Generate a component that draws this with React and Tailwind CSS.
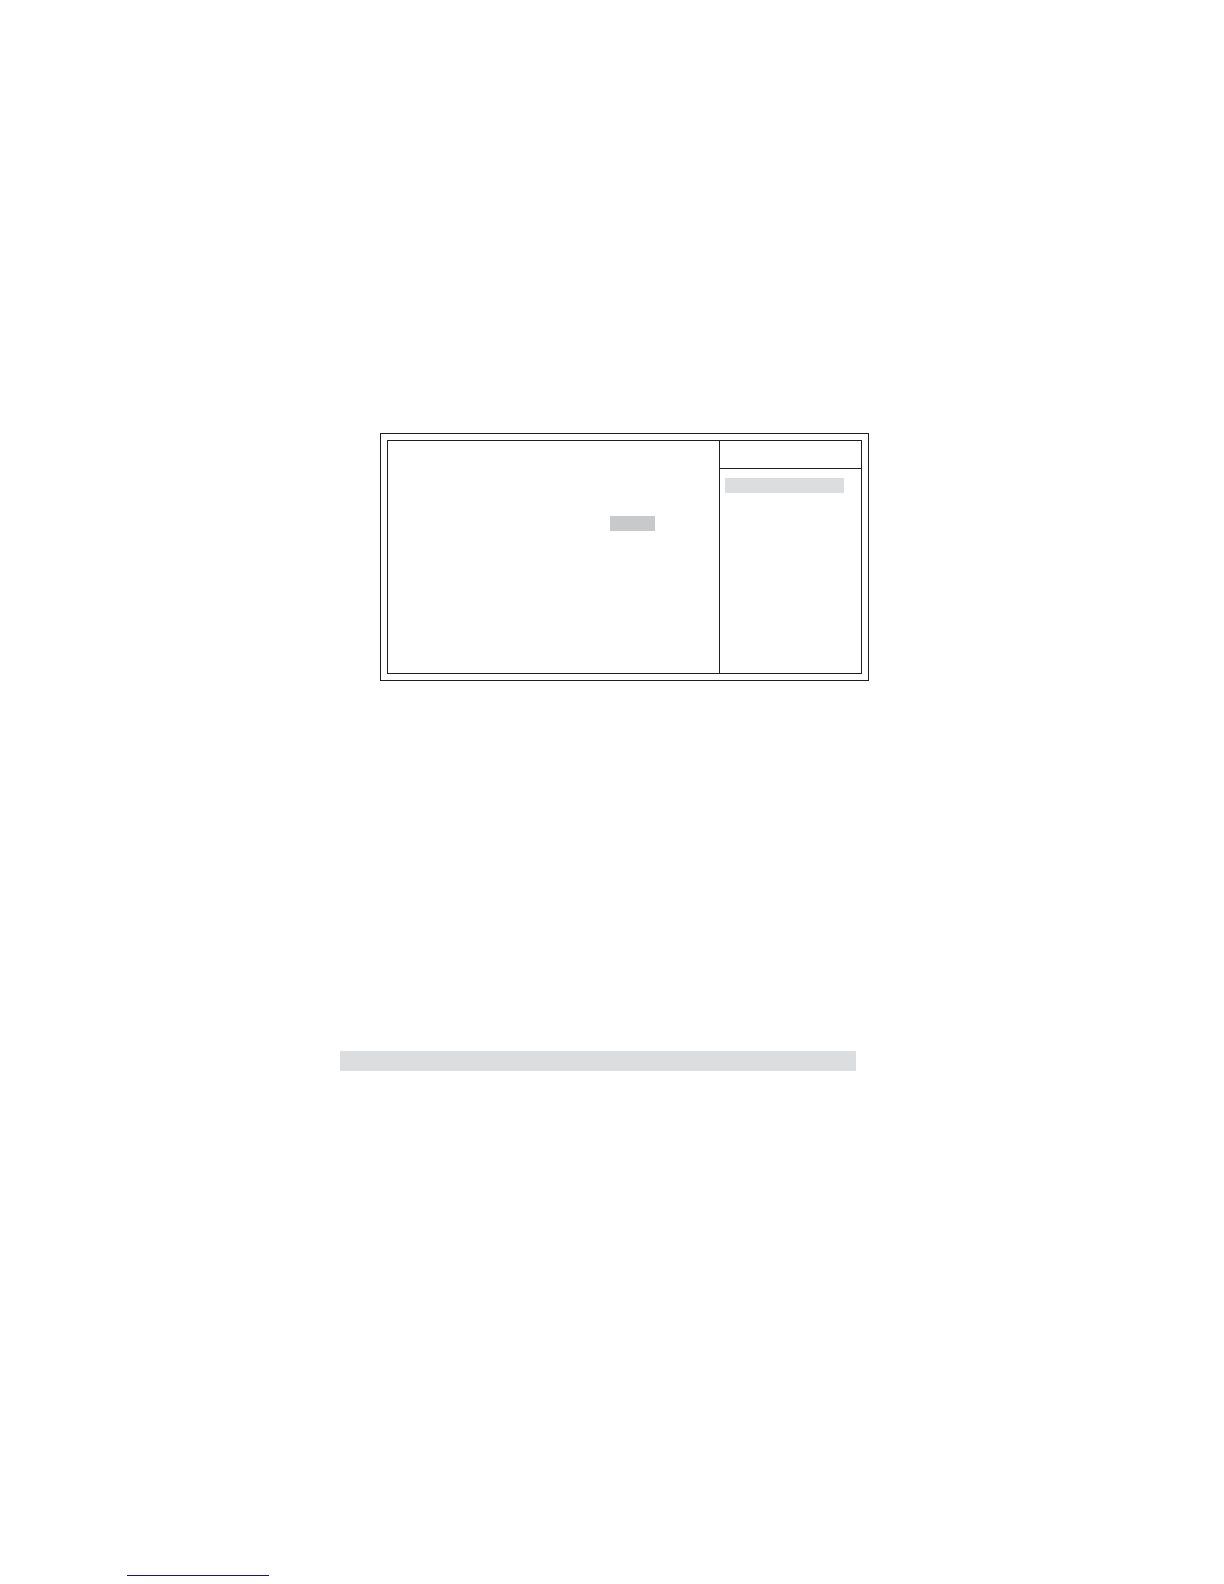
import React from "react";

function HelpPane() {
  return (
    <aside className="w-[142px] shrink-0 border-l border-[#1f1d1e]">
      <div className="h-7 border-b border-[#1f1d1e]" />
      <div className="pt-[9px] pl-[5px] pr-[17px]">
        <div className="h-[15px] bg-[#dcddde]" />
      </div>
    </aside>
  );
}

function SetupPanel() {
  return (
    <section className="ml-10 max-w-[489px] border border-[#1f1d1e] p-[6px]">
      <div className="flex min-h-[234px] border border-[#1f1d1e]">
        <div className="flex flex-1 items-start justify-end pt-[75px] pr-16">
          {/* selected value */}
          <div className="h-[15px] w-[45px] bg-[#c8c9ca]" />
        </div>
        <HelpPane />
      </div>
    </section>
  );
}

function App() {
  return (
    <div className="flex min-h-screen flex-col bg-white">
      <main className="flex-1 pt-[433px] pl-[340px]">
        <SetupPanel />
        <div className="mt-[370px] h-5 max-w-[516px] bg-[#dcddde]" />
      </main>

      <footer className="pb-2 pl-[127px]">
        <div className="h-px w-[142px] bg-[#14148c]" />
      </footer>
    </div>
  );
}

export default App;
